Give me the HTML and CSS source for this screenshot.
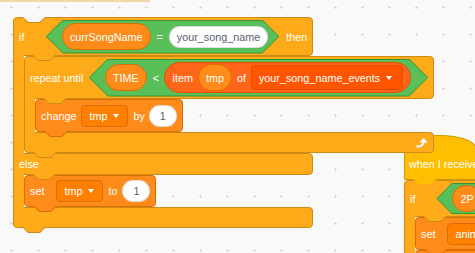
FILE: index.html
```html
<!DOCTYPE html>
<html lang="en">
<head>
    <meta charset="UTF-8">
    <meta name="viewport" content="width=device-width, initial-scale=1.0">
    <title>Scratch code area</title>
    <link rel="stylesheet" href="styles.css">
</head>
<body>

<div class="workspace">
    <div class="stub"></div>

    <!-- second script, partly hidden under the first one -->
    <div class="script script-receive">
        <div class="hat events">
            <span>when I receive</span>
        </div>
        <div class="c-block control">
            <div class="c-head head-if-small tab">
                <span>if</span>
                <span class="bool bool-small">
                    <span class="reporter var">2P</span>
                </span>
            </div>
            <div class="mouth">
                <div class="arm"></div>
                <div class="stack">
                    <div class="block variables tab">
                        <span class="set-label">set</span>
                        <span class="dropdown"><span>animation</span><i class="caret"></i></span>
                        <span>to</span>
                        <span class="num-field">1</span>
                    </div>
                    <div class="block variables tab">
                        <span class="set-label">set</span>
                        <span class="dropdown"><span>tmp</span><i class="caret"></i></span>
                    </div>
                </div>
            </div>
        </div>
    </div>

    <!-- main script -->
    <div class="script script-main">
        <div class="c-block control">
            <div class="c-head head-if tab">
                <span class="dip"></span>
                <span>if</span>
                <span class="bool bool-if">
                    <span class="reporter var">currSongName</span>
                    <span>=</span>
                    <span class="text-field">your_song_name</span>
                </span>
                <span class="then">then</span>
            </div>
            <div class="mouth">
                <div class="arm"></div>
                <div class="stack">
                    <div class="c-block control">
                        <div class="c-head head-repeat tab">
                            <span>repeat until</span>
                            <span class="bool bool-repeat">
                                <span class="reporter var">TIME</span>
                                <span class="lt">&lt;</span>
                                <span class="reporter list">
                                    <span>item</span>
                                    <span class="reporter var">tmp</span>
                                    <span>of</span>
                                    <span class="dropdown"><span>your_song_name_events</span><i class="caret"></i></span>
                                </span>
                            </span>
                        </div>
                        <div class="mouth">
                            <div class="arm"></div>
                            <div class="stack">
                                <div class="block variables tab block-change">
                                    <span>change</span>
                                    <span class="dropdown"><span>tmp</span><i class="caret"></i></span>
                                    <span>by</span>
                                    <span class="num-field">1</span>
                                </div>
                            </div>
                        </div>
                        <div class="c-foot tab">
                            <svg class="loop-arrow" width="12" height="11" viewBox="0 0 12 11">
                                <path d="M1 9.6 C5 9.6 7.6 8 7.6 4.6" fill="none" stroke="#fff" stroke-width="2" stroke-linecap="round"/>
                                <path d="M4.4 5.2 L7.6 1.2 L10.8 5.2 Z" fill="#fff" stroke="#fff" stroke-width="0.8" stroke-linejoin="round"/>
                            </svg>
                        </div>
                    </div>
                </div>
            </div>
            <div class="c-else tab"><span>else</span></div>
            <div class="mouth">
                <div class="arm"></div>
                <div class="stack">
                    <div class="block variables tab block-set">
                        <span class="set-label">set</span>
                        <span class="dropdown"><span>tmp</span><i class="caret"></i></span>
                        <span>to</span>
                        <span class="num-field">1</span>
                    </div>
                </div>
            </div>
            <div class="c-foot tab"></div>
        </div>
    </div>
</div>

</body>
</html>
```

FILE: styles.css
```css
body {
    margin: 0;
    background-color: #f9f9f9;
    font-family: "Liberation Sans", Arial, sans-serif;
}

.workspace {
    position: relative;
    width: 475px;
    height: 253px;
    overflow: hidden;
    background-color: #f9f9f9;
    background-image: radial-gradient(circle, #d8d8d8 1px, transparent 1.4px);
    background-size: 27px 27px;
    background-position: -2px -6px;
    font-size: 10.8px;
    color: #fff;
}

.stub {
    position: absolute;
    top: 0;
    left: 0;
    width: 150px;
    height: 2px;
    background-color: #f0d8a8;
}

/* category colours */
.control {
    --fill: #ffab19;
    --edge: #cf8b17;
}

.events {
    --fill: #ffbf00;
    --edge: #cc9900;
}

.variables,
.var {
    --fill: #ff8c1a;
    --edge: #db6e00;
    --field: #ff8000;
}

.list {
    --fill: #ff661a;
    --edge: #e64d00;
    --field: #ff5500;
}

/* scripts sit freely on the canvas */
.script {
    position: absolute;
    width: max-content;
}

.script-main {
    left: 13px;
    top: 17px;
    z-index: 2;
}

.script-receive {
    left: 404px;
    top: 135px;
    z-index: 1;
}

/* block shapes */
.c-block {
    display: flex;
    flex-direction: column;
}

.c-head,
.c-else,
.c-foot,
.block,
.hat {
    position: relative;
    display: flex;
    align-items: center;
    box-sizing: border-box;
    background-color: var(--fill);
    border: 1px solid var(--edge);
}

.c-head {
    padding: 0 5px;
    border-radius: 4px 4px 4px 0;
    --tab-x: 18px;
}

.c-else {
    height: 22px;
    padding: 0 5px;
    border-radius: 0 4px 4px 0;
    --tab-x: 18px;
}

.c-foot {
    height: 21px;
    padding-right: 5px;
    justify-content: flex-end;
    border-radius: 0 4px 4px 4px;
}

.mouth {
    display: flex;
    width: 0;
}

.arm {
    position: relative;
    z-index: 1;
    flex: 0 0 11px;
    box-sizing: border-box;
    margin: -1px 0;
    background-color: var(--fill);
    border-left: 1px solid var(--edge);
}

.stack {
    display: flex;
    flex-direction: column;
    align-items: flex-start;
    flex-shrink: 0;
}

.block {
    height: 33px;
    padding: 0 5px;
    gap: 5px;
    border-radius: 4px;
}

.block-set {
    height: 32px;
}

.block-change .num-field {
    margin-left: -1px;
}

.set-label {
    margin-right: 7px;
}

/* connection tab under a block, drawn over the next one */
.tab::before,
.tab::after {
    content: '';
    position: absolute;
    top: 100%;
    left: var(--tab-x, 8px);
    z-index: 3;
    clip-path: polygon(0 0, 100% 0, 75% 100%, 25% 100%);
}

.tab::before {
    width: 24px;
    height: 6px;
    background-color: var(--edge);
}

.tab::after {
    width: 22px;
    height: 5px;
    margin-left: 1px;
    background-color: var(--fill);
}

/* empty notch at the top of the first block */
.dip {
    position: absolute;
    top: -1px;
    left: 8px;
    z-index: 3;
    width: 24px;
    height: 6px;
    background-color: var(--edge);
    clip-path: polygon(0 0, 100% 0, 75% 100%, 25% 100%);
}

.dip::after {
    content: '';
    position: absolute;
    top: 0;
    left: 1px;
    width: 22px;
    height: 5px;
    background-color: #f9f9f9;
    clip-path: polygon(0 0, 100% 0, 75% 100%, 25% 100%);
}

/* hat block */
.hat {
    min-width: 220px;
    height: 33px;
    margin-top: 12px;
    padding: 0 5px 0 4px;
    border-radius: 0 4px 0 0;
}

.hat::before {
    content: '';
    position: absolute;
    left: -1px;
    top: -13px;
    width: 72px;
    height: 13px;
    box-sizing: border-box;
    background-color: var(--fill);
    border: 1px solid var(--edge);
    border-bottom: 0;
    border-radius: 36px 36px 0 0 / 13px 13px 0 0;
}

.hat::after {
    content: '';
    position: absolute;
    top: 100%;
    left: 8px;
    z-index: 3;
    width: 24px;
    height: 5px;
    background-color: var(--fill);
    clip-path: polygon(0 0, 100% 0, 75% 100%, 25% 100%);
}

/* heads */
.head-if {
    height: 39px;
}

.head-if .bool {
    margin-left: 21.5px;
}

.then {
    margin-left: 7px;
}

.head-repeat {
    height: 43px;
}

.head-repeat .bool {
    margin-left: 5.5px;
}

.head-if-small {
    height: 37px;
    min-width: 120px;
}

.head-if-small .bool {
    margin-left: 21px;
}

/* boolean hexagon */
.bool {
    position: relative;
    isolation: isolate;
    display: flex;
    align-items: center;
    box-sizing: border-box;
    background-color: #389438;
    clip-path: polygon(var(--pt) 0, calc(100% - var(--pt)) 0, 100% 50%, calc(100% - var(--pt)) 100%, var(--pt) 100%, 0 50%);
}

.bool::before {
    content: '';
    position: absolute;
    inset: 1px;
    z-index: -1;
    background-color: #59c059;
    clip-path: polygon(calc(var(--pt) - 1px) 0, calc(100% - var(--pt) + 1px) 0, 100% 50%, calc(100% - var(--pt) + 1px) 100%, calc(var(--pt) - 1px) 100%, 0 50%);
}

.bool-if {
    --pt: 17px;
    height: 34px;
    padding: 0 11px 0 16px;
    gap: 6px;
}

.bool-repeat {
    --pt: 19px;
    height: 38px;
    padding: 0 17px 0 16px;
    gap: 5px;
}

.bool-small {
    --pt: 15.5px;
    height: 31px;
    padding: 0 16px 0 16px;
}

.lt {
    margin-left: 1px;
}

/* reporters and fields */
.reporter {
    display: inline-flex;
    align-items: center;
    box-sizing: border-box;
    height: 27px;
    padding: 0 7px;
    border-radius: 14px;
    background-color: var(--fill);
    border: 1px solid var(--edge);
}

.reporter.list {
    height: 31px;
    padding: 0 7px 0 7.5px;
    gap: 5px;
    border-radius: 16px;
}

.dropdown {
    display: inline-flex;
    align-items: center;
    box-sizing: border-box;
    height: 22px;
    padding: 0 8px 0 7px;
    gap: 6px;
    border-radius: 4px;
    background-color: var(--field);
    border: 1px solid var(--edge);
}

.list .dropdown {
    height: 25px;
    padding-right: 10px;
}

.caret {
    width: 0;
    height: 0;
    border-left: 3px solid transparent;
    border-right: 3px solid transparent;
    border-top: 4px solid #fff;
}

.text-field,
.num-field {
    display: inline-flex;
    align-items: center;
    box-sizing: border-box;
    height: 22px;
    padding: 0 7px;
    border-radius: 11px;
    background-color: #fff;
    color: #575e75;
    border: 1px solid rgba(0, 0, 0, 0.12);
}

.num-field {
    min-width: 28px;
    justify-content: center;
}

.loop-arrow {
    display: block;
}
```
